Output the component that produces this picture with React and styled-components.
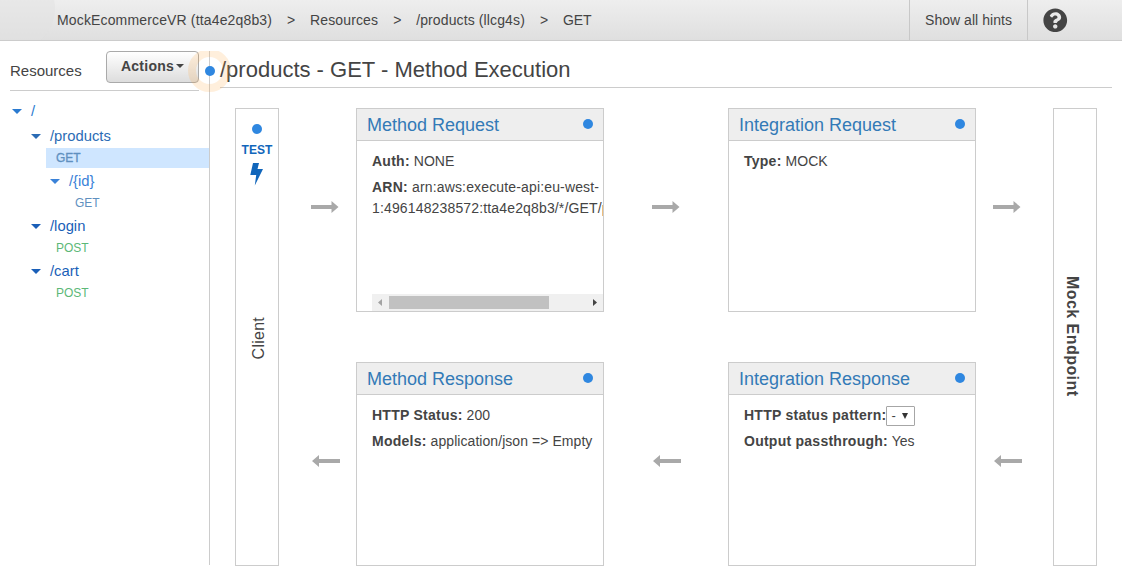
import React from "react";
import styled, { createGlobalStyle, css } from "styled-components";
import { FaQuestionCircle } from "react-icons/fa";

const Global = createGlobalStyle`
  * { box-sizing: border-box; }
  body {
    margin: 0;
    background: #fff;
    color: #444;
    font: 14px/21px "Liberation Sans", Arial, sans-serif;
    overflow: hidden;
  }
`;

const Page = styled.div`
  width: 1122px;
  height: 584px;
  display: flex;
  flex-direction: column;
`;

const TopBar = styled.header`
  position: relative;
  flex: none;
  height: 41px;
  display: flex;
  align-items: stretch;
  justify-content: space-between;
  border-bottom: 1px solid #ccc;
  background: linear-gradient(#eee, #dfdfdf);
  overflow: hidden;
`;

const Ripple = styled.span`
  position: absolute;
  left: -30px;
  top: -34px;
  width: 85px;
  height: 85px;
  border-radius: 50%;
  background: rgba(226, 226, 226, 0.5);
`;

const Crumbs = styled.nav`
  position: relative;
  display: flex;
  align-items: center;
  padding-left: 57px;
`;

const Crumb = styled.span`
  letter-spacing: ${(p) => p.$spacing || 0}px;
  white-space: nowrap;
`;

const Chevron = styled.span`
  width: 8px;
  margin: 0 15px;
`;

const TopActions = styled.div`
  display: flex;
`;

const HintsButton = styled.div`
  width: 118px;
  border-left: 1px solid #c8c8c8;
  display: flex;
  align-items: center;
  padding-left: 15px;
`;

const HelpButton = styled.div`
  width: 95px;
  border-left: 1px solid #c8c8c8;
  display: flex;
  align-items: center;
  padding-left: 15px;
`;

const Body = styled.div`
  display: flex;
  padding-top: 10px;
`;

const Sidebar = styled.aside`
  position: relative;
  width: 210px;
  height: 514px;
  border-right: 1px solid #ccc;
`;

const SideHead = styled.div`
  display: flex;
  justify-content: space-between;
  height: 40px;
  margin: 0 10px;
  border-bottom: 1px solid #ccc;
`;

const SideTitle = styled.span`
  font-size: 15px;
  line-height: 40px;
`;

const ActionsButton = styled.button`
  width: 93px;
  height: 32px;
  padding: 0 0 2px;
  border: 1px solid #aaa;
  border-radius: 4px;
  background: linear-gradient(#fff, #ddd);
  color: #444;
  font: bold 14px "Liberation Sans", Arial, sans-serif;
  letter-spacing: 0.25px;
  display: flex;
  align-items: center;
  justify-content: center;
  gap: 2px;
`;

const Caret = styled.i`
  border: ${(p) => p.$size || 4}px solid transparent;
  border-top-color: currentColor;
  border-bottom: 0;
`;

const Tree = styled.div`
  padding-top: 7px;
`;

const TreeRow = styled.div`
  display: flex;
  align-items: center;
  height: 25px;
  padding-left: ${(p) => 12 + p.$level * 19}px;
  gap: 9px;
  padding-top: 1px;
  font-size: 14.8px;
  color: ${(p) => p.$color || "#1a5fb8"};
`;

const MethodRow = styled.div`
  height: 20px;
  line-height: 20px;
  margin-left: ${(p) => 27 + p.$level * 19}px;
  padding-left: 10px;
  font-size: 12px;
  color: ${(p) => (p.$post ? "#5cb877" : "#5f90bf")};
  ${(p) =>
    p.$active &&
    css`
      background: #cfe6ff;
      color: #5f90bf;
      -webkit-text-stroke: 0.3px #5f90bf;
    `}
`;

const Dot = styled.span`
  flex: none;
  width: 10px;
  height: 10px;
  border-radius: 50%;
  background: #2f87e0;
`;

const Halo = styled.div`
  position: absolute;
  left: 188px;
  top: 0;
  width: 43px;
  height: 42px;
  overflow: hidden;
  z-index: 2;
`;

const HaloRing = styled.div`
  width: 43px;
  height: 43px;
  margin-top: -2px;
  border: 8px solid rgba(255, 165, 60, 0.18);
  border-radius: 50%;
  display: flex;
  align-items: center;
  justify-content: center;
`;

const Main = styled.main`
  flex: 1;
  padding: 0 10px;
`;

const Title = styled.h1`
  margin: 0;
  height: 37px;
  border-bottom: 1px solid #ccc;
  font-size: 22px;
  font-weight: normal;
  line-height: 37px;
`;

const Flow = styled.div`
  display: grid;
  grid-template-columns: 44px 77px 248px 124px 248px 77px 44px;
  grid-template-rows: 204px 204px;
  row-gap: 50px;
  padding: 20px 0 0 15px;
`;

const Pillar = styled.div`
  grid-row: 1 / 3;
  grid-column: ${(p) => p.$col};
  border: 1px solid #ccc;
  display: flex;
  flex-direction: column;
  align-items: center;
`;

const TestLink = styled.div`
  height: 79px;
  padding-top: 15px;
  display: flex;
  flex-direction: column;
  align-items: center;
  color: #1166bb;
  font-size: 12px;
  font-weight: bold;
  letter-spacing: 0.1px;
  line-height: 12px;
  gap: 10px;
  svg { margin-top: -3px; }
`;

const ClientLabel = styled.span`
  writing-mode: vertical-rl;
  transform: rotate(180deg);
  margin: 129px 0 0 3px;
  font-size: 16px;
  letter-spacing: 0.25px;
`;

const EndpointLabel = styled.span`
  writing-mode: vertical-rl;
  margin: 167px 0 0 -5px;
  font-size: 16px;
  font-weight: bold;
  letter-spacing: 0.45px;
`;

const ArrowCell = styled.div`
  grid-column: ${(p) => p.$col};
  grid-row: ${(p) => p.$row};
  padding: 93px 0 0 ${(p) => p.$offset}px;
  svg { display: block; }
`;

const Card = styled.section`
  grid-column: ${(p) => p.$col};
  grid-row: ${(p) => p.$row};
  border: 1px solid #ccc;
  display: flex;
  flex-direction: column;
  overflow: hidden;
`;

const CardHead = styled.header`
  height: 32px;
  flex: none;
  display: flex;
  align-items: flex-start;
  justify-content: space-between;
  padding: 10px 10px 0;
  background: #eee;
  border-bottom: 1px solid #ccc;
`;

const CardTitle = styled.span`
  margin-top: -4px;
  color: #337ab7;
  font-size: 18px;
`;

const CardBody = styled.div`
  flex: 1;
  display: flex;
  flex-direction: column;
  gap: 5px;
  padding: 10px 0 0 15px;
`;

const Field = styled.div`
  display: flex;
  align-items: center;
  height: ${(p) => (p.$lines || 1) * 21}px;
  white-space: pre;
  letter-spacing: ${(p) => p.$spacing || 0.06}px;
  b { letter-spacing: 0.25px; }
`;

const LongField = styled(Field)`
  display: block;
`;

const Picker = styled.span`
  width: 29px;
  height: 20px;
  margin-left: auto;
  margin-right: 60px;
  padding: 0 6px 0 4px;
  border: 1px solid #a6a6a6;
  border-radius: 1px;
  display: flex;
  align-items: center;
  justify-content: space-between;
  font-size: 13px;
`;

const ScrollTrack = styled.div`
  margin-top: auto;
  height: 17px;
  background: #f0f0f0;
  display: flex;
  align-items: center;
`;

const ScrollThumb = styled.div`
  width: 160px;
  height: 13px;
  background: #c1c1c1;
`;

const ScrollArrow = styled.svg`
  margin: ${(p) => p.$margin};
`;

function Arrow({ col, row, offset, left }) {
  return (
    <ArrowCell $col={col} $row={row} $offset={offset}>
      <svg width="28" height="12" viewBox="0 0 28 12" fill="#a9a9a9">
        <path d={left ? "M28 4H7V0L0 6L7 12V8H28Z" : "M0 4H20.500V0L27.500 6L20.500 12V8H0Z"} />
      </svg>
    </ArrowCell>
  );
}

function Panel({ title, col, row, children }) {
  return (
    <Card $col={col} $row={row}>
      <CardHead>
        <CardTitle>{title}</CardTitle>
        <Dot />
      </CardHead>
      <CardBody>{children}</CardBody>
    </Card>
  );
}

export default function App() {
  return (
    <Page>
      <Global />
      <TopBar>
        <Ripple />
        <Crumbs>
          <Crumb $spacing={0.15}>MockEcommerceVR (tta4e2q8b3)</Crumb>
          <Chevron>&gt;</Chevron>
          <Crumb $spacing={0.13}>Resources</Crumb>
          <Chevron>&gt;</Chevron>
          <Crumb $spacing={0.12}>/products (llcg4s)</Crumb>
          <Chevron>&gt;</Chevron>
          <Crumb $spacing={-0.1}>GET</Crumb>
        </Crumbs>
        <TopActions>
          <HintsButton>
            <Crumb $spacing={0.04}>Show all hints</Crumb>
          </HintsButton>
          <HelpButton>
            <FaQuestionCircle size={24.5} />
          </HelpButton>
        </TopActions>
      </TopBar>
      <Body>
        <Sidebar>
          <SideHead>
            <SideTitle>Resources</SideTitle>
            <ActionsButton>
              Actions
              <Caret />
            </ActionsButton>
          </SideHead>
          <Tree>
            <TreeRow $level={0} $color="#2a7ad0"><Caret $size={5} />/</TreeRow>
            <TreeRow $level={1} $color="#2b6cb5"><Caret $size={5} />/products</TreeRow>
            <MethodRow $level={1} $active>GET</MethodRow>
            <TreeRow $level={2} $color="#3a82d8"><Caret $size={5} />/&#123;id&#125;</TreeRow>
            <MethodRow $level={2}>GET</MethodRow>
            <TreeRow $level={1}><Caret $size={5} />/login</TreeRow>
            <MethodRow $level={1} $post>POST</MethodRow>
            <TreeRow $level={1}><Caret $size={5} />/cart</TreeRow>
            <MethodRow $level={1} $post>POST</MethodRow>
          </Tree>
          <Halo>
            <HaloRing>
              <Dot />
            </HaloRing>
          </Halo>
        </Sidebar>
        <Main>
          <Title>/products - GET - Method Execution</Title>
          <Flow>
            <Pillar $col={1}>
              <TestLink>
                <Dot />
                TEST
                <svg width="13" height="23" viewBox="0 0 13 23" fill="#1166bb">
                  <path d="M3 0H9L7.500 6H13L4.800 22.500L6.200 12H0.300Z" />
                </svg>
              </TestLink>
              <ClientLabel>Client</ClientLabel>
            </Pillar>
            <Arrow col={2} row={1} offset={32} />
            <Arrow col={2} row={2} offset={33} left />
            <Panel title="Method Request" col={3} row={1}>
              <Field><b>Auth:</b> NONE</Field>
              <LongField $lines={2} $spacing={0.15}>
                <b>ARN:</b> arn:aws:execute-api:eu-west-{"\n"}1:496148238572:tta4e2q8b3/*/GET/products
              </LongField>
              <ScrollTrack>
                <ScrollArrow $margin="0 7px 0 6px" width="4" height="7" viewBox="0 0 4 7" fill="#a3a3a3">
                  <path d="M4 0V7L0 3.500Z" />
                </ScrollArrow>
                <ScrollThumb />
                <ScrollArrow $margin="0 6px 0 auto" width="4" height="7" viewBox="0 0 4 7" fill="#444">
                  <path d="M0 0V7L4 3.500Z" />
                </ScrollArrow>
              </ScrollTrack>
            </Panel>
            <Arrow col={4} row={1} offset={48} />
            <Arrow col={4} row={2} offset={49} left />
            <Panel title="Integration Request" col={5} row={1}>
              <Field><b>Type:</b> MOCK</Field>
            </Panel>
            <Arrow col={6} row={1} offset={17} />
            <Arrow col={6} row={2} offset={17.5} left />
            <Panel title="Method Response" col={3} row={2}>
              <Field><b>HTTP Status:</b> 200</Field>
              <Field><b>Models:</b> application/json =&gt; Empty</Field>
            </Panel>
            <Panel title="Integration Response" col={5} row={2}>
              <Field>
                <b>HTTP status pattern:</b>
                <Picker>
                  -
                  <svg width="6" height="6" viewBox="0 0 6 6" fill="#333">
                    <path d="M0 0H6L3 6Z" />
                  </svg>
                </Picker>
              </Field>
              <Field><b>Output passthrough:</b> Yes</Field>
            </Panel>
            <Pillar $col={7}>
              <EndpointLabel>Mock Endpoint</EndpointLabel>
            </Pillar>
          </Flow>
        </Main>
      </Body>
    </Page>
  );
}
